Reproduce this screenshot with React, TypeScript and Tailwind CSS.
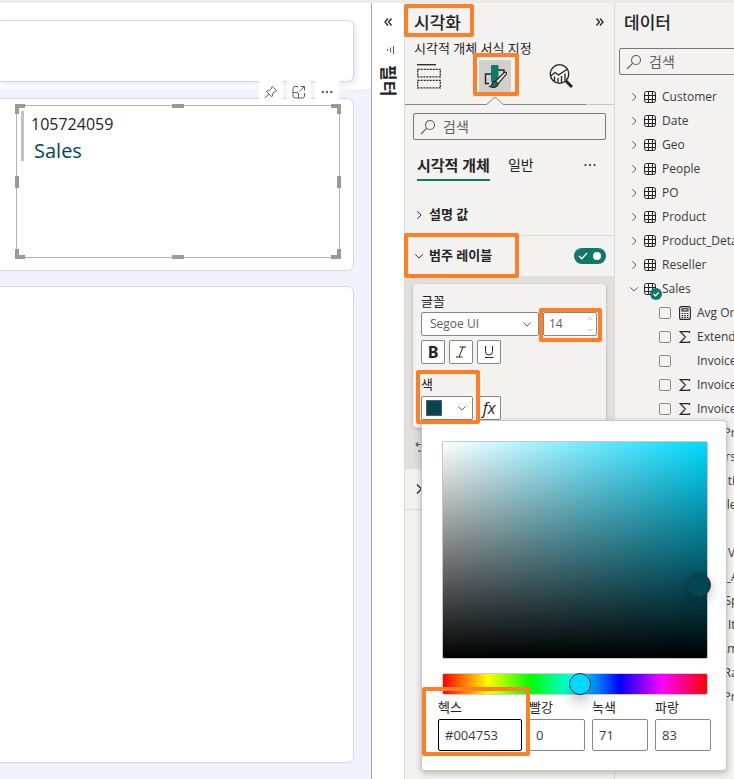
import React from "react";

const tables = ["Customer", "Date", "Geo", "People", "PO", "Product", "Product_Details", "Reseller"];

type Field = { name: string; kind: "calc" | "sum" | "none" };

const fields: Field[] = [
  { name: "Avg Order", kind: "calc" },
  { name: "Extended Amount", kind: "sum" },
  { name: "Invoice Date", kind: "none" },
  { name: "Invoice Line", kind: "sum" },
  { name: "Invoice Number", kind: "sum" },
  { name: "Line Profit", kind: "sum" },
  { name: "Orders", kind: "sum" },
  { name: "Quantity", kind: "sum" },
  { name: "Reseller", kind: "none" },
  { name: "Tax", kind: "sum" },
  { name: "Total Value", kind: "sum" },
  { name: "Sales_Amount", kind: "sum" },
  { name: "Ship Speed", kind: "none" },
  { name: "Total Items", kind: "sum" },
  { name: "Tax Amount", kind: "sum" },
  { name: "Unit Rate", kind: "sum" },
  { name: "Unit Price", kind: "sum" },
];

function Chevron({ dir, className = "" }: { dir: "right" | "down" | "up"; className?: string }) {
  const d = { right: "M4 1.5 8.5 6 4 10.5", down: "M1.5 4 6 8.5 10.5 4", up: "M1.5 8 6 3.5 10.5 8" }[dir];
  return (
    <svg viewBox="0 0 12 12" className={`shrink-0 ${className}`} fill="none" stroke="currentColor" strokeWidth="1.2">
      <path d={d} />
    </svg>
  );
}

function DoubleChevron({ flip = false }: { flip?: boolean }) {
  return (
    <svg viewBox="0 0 10 10" className="size-[10px]" fill="none" stroke="#252423" strokeWidth="1.3">
      <path d={flip ? "M1.5 1.5 4.5 5 1.5 8.5M5 1.5 8 5 5 8.5" : "M5 1.5 2 5 5 8.5M8.5 1.5 5.5 5 8.5 8.5"} />
    </svg>
  );
}

function SearchIcon() {
  return (
    <svg viewBox="0 0 16 16" className="size-4 shrink-0" fill="none" stroke="#605e5c" strokeWidth="1.1">
      <circle cx="10" cy="6" r="4.5" />
      <path d="M6.8 9.2 1 15" />
    </svg>
  );
}

function TableIcon() {
  return (
    <svg viewBox="0 0 12 12" className="size-3 shrink-0" fill="none" stroke="#252423" strokeWidth="1">
      <rect x="0.5" y="0.5" width="11" height="11" rx="2" />
      <path d="M4.5.5v11M8.500.5v11M.5 4.500h11M.5 8.500h11" />
    </svg>
  );
}

function FieldIcon({ kind }: { kind: Field["kind"] }) {
  if (kind === "calc")
    return (
      <svg viewBox="0 0 12 14" className="h-[14px] w-3 shrink-0" fill="none" stroke="#252423" strokeWidth="1.1">
        <rect x="0.6" y="0.6" width="10.8" height="12.8" rx="2" />
        <rect x="3" y="2.8" width="6" height="2.2" />
        <path d="M2.6 7.500h1.600M5.200 7.500h1.600M7.800 7.500h1.600M2.600 9.500h1.600M5.200 9.500h1.600M7.800 9.500h1.600M2.600 11.400h1.600M5.200 11.400h1.600M7.800 11.400h1.600" />
      </svg>
    );
  if (kind === "sum")
    return (
      <svg viewBox="0 0 12 14" className="h-[14px] w-3 shrink-0" fill="none" stroke="#252423" strokeWidth="1.1">
        <path d="M10.500 3V1.600H1.200L6.500 7 1.200 12.400h9.300V11" />
      </svg>
    );
  return <span className="w-3 shrink-0" />;
}

function Highlight({ className }: { className: string }) {
  return <div className={`pointer-events-none absolute z-20 rounded-xs border-4 border-[#ff7f27] ${className}`} />;
}

function Canvas() {
  return (
    <main className="flex min-w-0 flex-1 flex-col bg-[linear-gradient(#fff_86px,#f2f2ff_86px)] pt-[17px] pr-[17px] pb-4">
      <div className="h-[62px] shrink-0 rounded-r-md border border-l-0 border-[#d8d7e6] bg-white shadow-[2px_2px_6px_#e2e2fa]" />
      <section className="relative mt-4 h-[173px] shrink-0 rounded-r-md border border-l-0 border-[#d8d7e6] bg-white">
        <div className="absolute right-[14px] -top-[18px] flex gap-1">
          <button aria-label="고정" className="flex h-[18px] w-6 items-end justify-center bg-white">
            <svg viewBox="0 0 14 14" className="size-[14px]" fill="none" stroke="#605e5c" strokeWidth="1">
              <path d="M8.300 1.300 12.700 5.700 11.500 6.600 10.500 6.500 8.500 9 8.300 11.300 7.500 11.700 2.500 6.700 3 5.900 5.200 5.500 7.600 3.400 7.500 2.300ZM4.900 9.200 1 13" />
            </svg>
          </button>
          <button aria-label="포커스 모드" className="flex h-[18px] w-6 items-end justify-center bg-white">
            <svg viewBox="0 0 14 14" className="size-[14px]" fill="none" stroke="#605e5c" strokeWidth="1">
              <path d="M6 1.500H3a2 2 0 0 0-2 2V11a2 2 0 0 0 2 2h7.500a2 2 0 0 0 2-2V8M1 7.500h4A1.500 1.500 0 0 1 6.500 9v4M8.500 1.500h4v4M12.300 1.700 7.500 6.500" />
            </svg>
          </button>
          <button aria-label="추가 옵션" className="flex h-[18px] w-6 items-center justify-center bg-white pt-1">
            <svg viewBox="0 0 12 4" className="h-1 w-3" fill="#605e5c">
              <circle cx="1.700" cy="2" r="1.200" /><circle cx="6" cy="2" r="1.200" /><circle cx="10.300" cy="2" r="1.200" />
            </svg>
          </button>
        </div>
        <div className="relative mt-[6px] mr-[13px] ml-4 h-[153px] border border-[#b3b3b3]">
          <div className="mt-[5px] ml-1 flex h-[50px] flex-col border-l-[3px] border-[#c2c2c2] pl-[7px]">
            <p className="text-base leading-[26px] text-[#252423]">105724059</p>
            <p className="pl-[3px] text-xl leading-[27px] text-[#004753]">Sales</p>
          </div>
          <i className="absolute -top-[2px] -left-[2px] size-[10px] border-t-4 border-l-4 border-[#999]" />
          <i className="absolute -top-[2px] -right-[2px] size-[10px] border-t-4 border-r-4 border-[#999]" />
          <i className="absolute -bottom-[2px] -left-[2px] size-[10px] border-b-4 border-l-4 border-[#999]" />
          <i className="absolute -right-[2px] -bottom-[2px] size-[10px] border-r-4 border-b-4 border-[#999]" />
          <i className="absolute -top-[2px] left-1/2 h-1 w-3 -translate-x-1/2 bg-[#999]" />
          <i className="absolute -bottom-[2px] left-1/2 h-1 w-3 -translate-x-1/2 bg-[#999]" />
          <i className="absolute top-1/2 -left-[2px] h-3 w-1 -translate-y-1/2 bg-[#999]" />
          <i className="absolute top-1/2 -right-[2px] h-3 w-1 -translate-y-1/2 bg-[#999]" />
        </div>
      </section>
      <div className="mt-[15px] flex-1 rounded-r-md border border-l-0 border-[#d8d7e6] bg-white" />
    </main>
  );
}

function FilterPane() {
  return (
    <aside className="flex w-[33px] shrink-0 flex-col items-center border-l border-[#a6a6a6] bg-white pt-[14px]">
      <button aria-label="필터 확장"><DoubleChevron /></button>
      <svg viewBox="0 0 10 10" className="mt-[18px] ml-1 size-[10px]" stroke="#605e5c" strokeWidth="1.1">
        <path d="M2.500 4v2M5.500 2.500v5M8.500 1v8" />
      </svg>
      <h2 className="mt-[10px] text-[17px] leading-5 font-bold [text-orientation:sideways] [writing-mode:vertical-rl]">필터</h2>
    </aside>
  );
}

function ColorInput({ label, value, id, wide = false }: { label: string; value: string; id: string; wide?: boolean }) {
  return (
    <div className={wide ? "w-[84px]" : "w-14"}>
      <label htmlFor={id} className="block text-[13px] leading-6">{label}</label>
      <input
        id={id}
        defaultValue={value}
        className={`h-8 w-full rounded-xs border bg-white px-[6px] text-[13px] text-[#3b3a39] outline-none ${wide ? "border-black" : "border-[#8a8886]"}`}
      />
    </div>
  );
}

function ColorPicker() {
  return (
    <div className="absolute top-[417px] left-4 z-10 w-[306px] rounded-sm border border-[#c8c6c4] bg-white pt-5 pr-[14px] pb-[19px] pl-4 shadow-[0_2px_6px_rgba(0,0,0,0.25)]">
      <div className="relative mr-1 ml-1 h-[218px] rounded-xs border border-[#c8c6c4] bg-[linear-gradient(to_bottom,transparent,#000),linear-gradient(to_right,#fff,#00d9ff)]">
        <span className="absolute top-[131px] -right-[4px] size-6 rounded-full border border-[#323130] bg-[#004753] shadow-[0_4px_12px_rgba(0,0,0,0.25)]" />
      </div>
      <input
        type="range"
        aria-label="색조"
        min={0}
        max={360}
        defaultValue={187}
        className="mx-1 mt-[14px] block h-[22px] w-[266px] appearance-none rounded-xs border border-[#d2d0ce] bg-[linear-gradient(to_right,red,#ff0_17%,#0f0_33%,#0ff_50%,#00f_67%,#f0f_83%,red)] [&::-webkit-slider-thumb]:size-[22px] [&::-webkit-slider-thumb]:appearance-none [&::-webkit-slider-thumb]:rounded-full [&::-webkit-slider-thumb]:border [&::-webkit-slider-thumb]:border-[#323130] [&::-webkit-slider-thumb]:bg-[#00d9ff] [&::-webkit-slider-thumb]:shadow-[0_8px_12px_rgba(0,0,0,0.2)]"
      />
      <div className="flex gap-[7px]">
        <ColorInput id="hex" label="헥스" value="#004753" wide />
        <ColorInput id="red" label="빨강" value="0" />
        <ColorInput id="green" label="녹색" value="71" />
        <ColorInput id="blue" label="파랑" value="83" />
      </div>
    </div>
  );
}

function PaneTabs() {
  return (
    <div className="relative flex h-12 items-start border-b border-[#8a8886] pt-[3px]">
      <button aria-label="필드" className="mt-1 ml-3 size-6">
        <svg viewBox="0 0 24 26" className="h-[26px] w-6" fill="none" stroke="#252423" strokeWidth="1.3">
          <path d="M0 .7h19" />
          <path d="M.7 5.300h22.600v7.500H.7zM.7 16.300h22.600v7.500H.7z" strokeDasharray="2 1" />
        </svg>
      </button>
      <button aria-label="서식" className="ml-[38px] flex size-8 items-center justify-center bg-[#d2d0ce]">
        <svg viewBox="0 0 24 24" className="size-6" fill="none" stroke="#252423" strokeWidth="1.4">
          <path d="M8.500 10H2.500v9.500H6M15 6h6v3" />
          <path d="M8.500 1.500h6.500v12l-3 4H8.500z" fill="#117865" stroke="#117865" strokeWidth="1" />
          <path d="M23.300 8.500c.5.6.2 1.300-.2 1.900L15 19.800l-2.800-2.300 8.800-8.700c.7-.6 1.700-.9 2.300-.3Z" fill="#f3f2f1" strokeWidth="1.2" />
          <path d="M12.200 17.300c-2.200 0-3 1.700-3.300 3.200-.2 1-1 1.700-2.100 2 2.900 1.600 8.200 1 8.200-2.900Z" fill="#117865" strokeWidth="1.2" />
        </svg>
      </button>
      <button aria-label="분석" className="mt-1 ml-[38px] size-6">
        <svg viewBox="0 0 24 24" className="size-6" fill="none" stroke="#252423" strokeWidth="1.3">
          <circle cx="10.500" cy="10" r="9.300" />
          <path d="M1.500 12 6 8.500 9.500 11 18.500 5M5.500 12.500v4.500M9 14v5M12.500 12v7M16 9.500v7" />
          <path d="m17 17 6 6" strokeWidth="3" />
        </svg>
      </button>
      <svg viewBox="0 0 18 9" className="absolute -bottom-[1px] left-[81px] h-[9px] w-[18px]" fill="#f3f2f1" stroke="#8a8886">
        <path d="M0 9 9 1l9 8" />
      </svg>
      <span className="absolute right-0 -bottom-[1px] h-px w-7 bg-[#c8c6c4]" />
    </div>
  );
}

function VisualPane() {
  const square = "flex size-6 items-center justify-center rounded-xs border border-[#8a8886] bg-white leading-none";
  return (
    <aside className="relative flex w-[211px] shrink-0 flex-col border-x border-[#dcdad8] bg-[#f3f2f1]">
      <header className="flex h-9 items-center justify-between px-[9px] pt-[3px]">
        <h2 className="text-[17px] leading-6 font-medium">시각화</h2>
        <button aria-label="창 축소" className="pb-[2px]"><DoubleChevron flip /></button>
      </header>
      <p className="h-[18px] pl-[9px] text-[13px] leading-[18px]">시각적 개체 서식 지정</p>
      <PaneTabs />
      <label className="mx-2 mt-2 flex h-[27px] items-center gap-[7px] rounded-xs border border-[#7a7876] px-[6px]">
        <SearchIcon />
        <input aria-label="검색" placeholder="검색" className="w-full min-w-0 bg-transparent text-sm outline-none placeholder:text-[#605e5c]" />
      </label>
      <nav className="mt-[11px] flex h-[30px] items-start pr-[18px] pl-3 text-sm leading-[27px]">
        <button className="h-full border-b-2 border-[#117865] text-[15px] font-bold">시각적 개체</button>
        <button className="ml-[18px]">일반</button>
        <button aria-label="더 보기" className="mt-3 ml-auto">
          <svg viewBox="0 0 12 4" className="h-1 w-3" fill="#252423">
            <circle cx="1.500" cy="2" r="1" /><circle cx="6" cy="2" r="1" /><circle cx="10.500" cy="2" r="1" />
          </svg>
        </button>
      </nav>
      <button className="mt-[14px] flex h-[41px] items-center gap-[5px] border-b border-[#dcdad8] pl-[9px] text-[13px] font-bold">
        <Chevron dir="right" className="size-[10px]" />설명 값
      </button>
      <div className="flex h-10 items-center justify-between pr-2 pl-[9px]">
        <button className="flex items-center gap-[5px] text-[13px] font-bold">
          <Chevron dir="down" className="size-[10px]" />범주 레이블
        </button>
        <label className="flex h-4 w-8 items-center justify-end gap-[5px] rounded-full bg-[#117865] pr-[5px]">
          <input type="checkbox" role="switch" aria-label="범주 레이블" defaultChecked className="sr-only" />
          <svg viewBox="0 0 10 8" className="h-2 w-[10px]" fill="none" stroke="#fff" strokeWidth="1.3"><path d="m1 4 2.800 2.800L9 1" /></svg>
          <span className="size-2 rounded-full bg-white" />
        </label>
      </div>
      <div className="h-[193px] bg-[#e1dfdd] px-2 pt-2">
        <div className="flex h-36 flex-col rounded-sm bg-[#f3f2f1] px-2 pt-[6px] shadow-[0_1px_3px_rgba(0,0,0,0.25)]">
          <label htmlFor="font" className="text-[13px] leading-[22px]">글꼴</label>
          <div className="flex gap-1">
            <div className="relative h-6 flex-1">
              <select id="font" className="block h-6 w-full appearance-none rounded-xs border border-[#8a8886] bg-white px-2 text-xs text-[#605e5c]">
                <option>Segoe UI</option>
              </select>
              <Chevron dir="down" className="pointer-events-none absolute top-[7px] right-[7px] size-[10px] text-[#605e5c]" />
            </div>
            <div className="mr-[1px] flex h-6 w-[54px] items-center rounded-xs border border-[#8a8886] bg-white pr-[3px] pl-[5px]">
              <input aria-label="글꼴 크기" defaultValue="14" className="w-full min-w-0 text-xs text-[#605e5c] outline-none" />
              <span className="flex flex-col gap-[5px] text-[#8a8886]">
                <Chevron dir="up" className="size-[6px]" />
                <Chevron dir="down" className="size-[6px]" />
              </span>
            </div>
          </div>
          <div className="mt-1 flex gap-1">
            <button aria-label="굵게" className={`${square} text-base font-bold`}>B</button>
            <button aria-label="기울임꼴" className={square}>
              <svg viewBox="0 0 12 12" className="size-3" fill="none" stroke="#252423"><path d="M4.500 1H11M1 11h6.500M8 1 4 11" /></svg>
            </button>
            <button aria-label="밑줄" className={square}>
              <svg viewBox="0 0 12 14" className="h-[14px] w-3" fill="none" stroke="#252423"><path d="M2.500 1v5.500a3.500 3.500 0 0 0 7 0V1M2 12.500h8.500" /></svg>
            </button>
          </div>
          <label htmlFor="color" className="mt-[9px] text-[13px] leading-[23px]">색</label>
          <div className="flex gap-1">
            <button id="color" className="flex h-6 w-[52px] items-center justify-between rounded-xs border border-[#8a8886] bg-white pr-[5px] pl-1">
              <span className="size-4 border border-[#605e5c] bg-[#004753]" />
              <Chevron dir="down" className="size-[10px] text-[#605e5c]" />
            </button>
            <button aria-label="조건부 서식" className={`${square} text-base italic`}>fx</button>
          </div>
        </div>
        <button aria-label="기본값으로 되돌리기" className="mt-[14px] block pl-[2px]">
          <svg viewBox="0 0 10 10" className="size-[10px]" fill="none" stroke="#605e5c" strokeWidth="1.1">
            <path d="M3 .5 1 2.500l2 2M1 2.500h5a3.300 3.300 0 0 1 0 6.600H3" />
          </svg>
        </button>
      </div>
      <div className="flex h-[41px] items-center border-b border-[#dcdad8] pl-2">
        <Chevron dir="right" className="size-3" />
      </div>

      <ColorPicker />
      <Highlight className="top-[1px] -left-[1px] h-[33px] w-[70px]" />
      <Highlight className="top-[50px] left-[68px] h-[43px] w-[46px]" />
      <Highlight className="top-[230px] -left-[1px] h-[45px] w-[115px]" />
      <Highlight className="top-[305px] left-[134px] h-[34px] w-[63px]" />
      <Highlight className="top-[367px] left-[11px] h-[54px] w-16" />
      <Highlight className="top-[684px] left-[17px] h-[69px] w-[108px]" />
    </aside>
  );
}

function DataPane() {
  return (
    <aside className="w-[119px] shrink-0 overflow-hidden bg-[#f3f2f1]">
      <h2 className="pt-2 pl-[9px] text-[17px] leading-6 font-medium">데이터</h2>
      <div className="w-[220px] pl-1">
        <label className="mt-[13px] flex h-[27px] items-center gap-[7px] rounded-xs border border-[#7a7876] px-[6px]">
          <SearchIcon />
          <input aria-label="데이터 검색" placeholder="검색" className="w-full min-w-0 bg-transparent text-sm outline-none placeholder:text-[#605e5c]" />
        </label>
        <ul className="mt-[10px] text-xs text-[#3b3a39]">
          {tables.map((name) => (
            <li key={name} className="flex h-6 items-center pl-[10px]">
              <Chevron dir="right" className="mr-[5px] size-[10px] text-[#605e5c]" />
              <TableIcon />
              <span className="ml-[6px]">{name}</span>
            </li>
          ))}
          <li>
            <div className="relative flex h-6 items-center pl-[10px]">
              <Chevron dir="down" className="mr-[5px] size-[10px] text-[#605e5c]" />
              <TableIcon />
              <span className="ml-[6px]">Sales</span>
              <svg viewBox="0 0 12 12" className="absolute top-[11px] left-[31px] size-3">
                <circle cx="6" cy="6" r="6" fill="#117865" />
                <path d="m3.500 6 1.800 1.800L8.700 4.500" fill="none" stroke="#fff" strokeWidth="1.3" />
              </svg>
            </div>
            <ul>
              {fields.map((f) => (
                <li key={f.name}>
                  <label className="flex h-6 items-center whitespace-nowrap pl-10">
                    <input type="checkbox" className="size-3 shrink-0 appearance-none rounded-xs border border-[#8a8886]" />
                    <span className="mr-[6px] ml-2 flex"><FieldIcon kind={f.kind} /></span>
                    {f.name}
                  </label>
                </li>
              ))}
            </ul>
          </li>
        </ul>
      </div>
    </aside>
  );
}

export default function App() {
  return (
    <div className="flex h-screen min-h-[779px] flex-col overflow-hidden border-t-[3px] border-[#ebebeb] bg-white font-['Open_Sans','Noto_Sans_CJK_KR',sans-serif] text-[#252423]">
      <div className="flex min-h-0 flex-1">
        <Canvas />
        <FilterPane />
        <VisualPane />
        <DataPane />
      </div>
    </div>
  );
}
